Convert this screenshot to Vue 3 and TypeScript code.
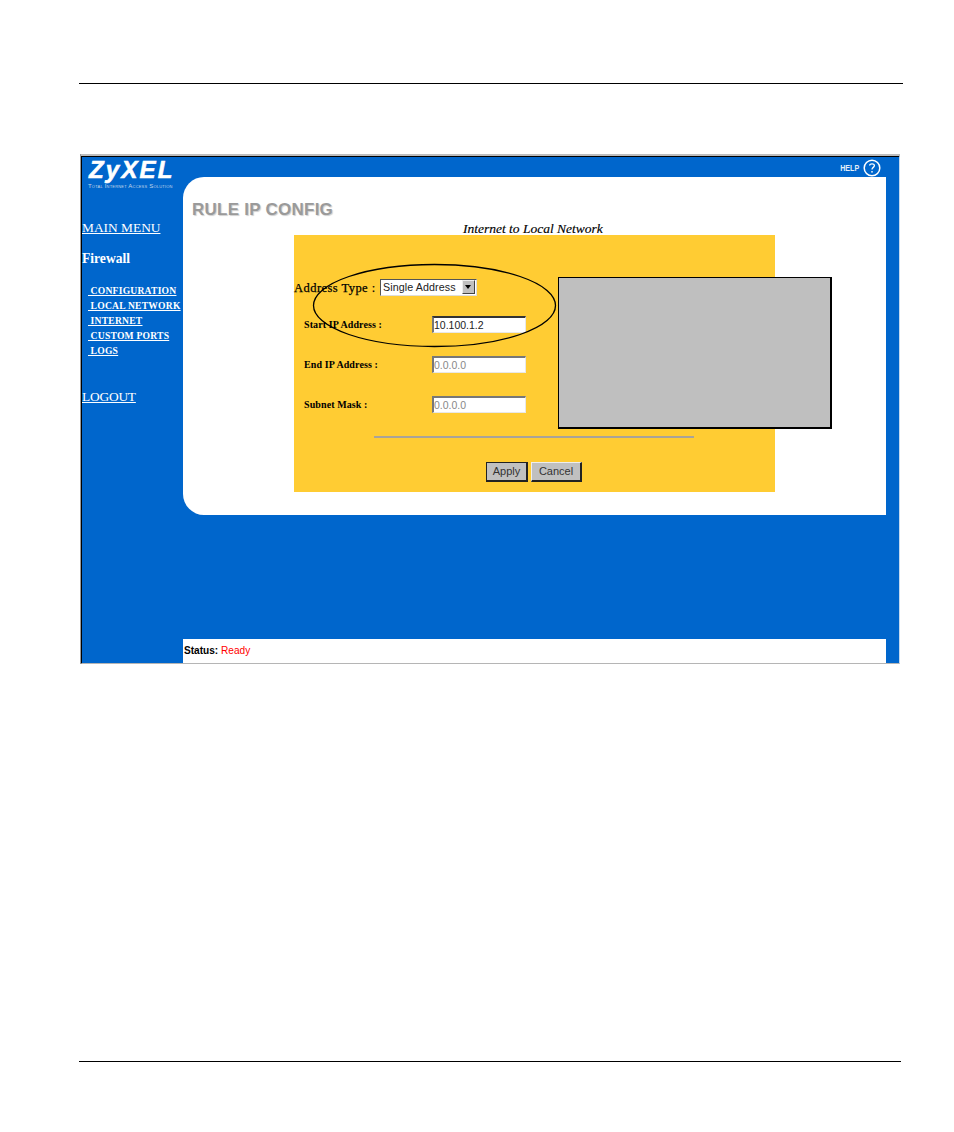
<script setup lang="ts">
const navLinks: string[] = ['CONFIGURATION', 'LOCAL NETWORK', 'INTERNET', 'CUSTOM PORTS', 'LOGS']
</script>

<template>
  <div class="page">
    <div class="rule"></div>
    <div class="frame">
      <aside class="side">
        <div class="logo">ZyXEL</div>
        <div class="tagline">Total Internet Access Solution</div>
        <a class="main-link">MAIN MENU</a>
        <div class="section">Firewall</div>
        <nav class="nav">
          <a v-for="l in navLinks" :key="l" class="nav-link">&nbsp;{{ l }}</a>
        </nav>
        <a class="logout">LOGOUT</a>
      </aside>
      <main class="main">
        <div class="help">
          <span class="help-text">HELP</span>
          <svg class="help-icon" width="18" height="18" viewBox="0 0 18 18">
            <circle cx="9" cy="9" r="7.8" fill="none" stroke="#fff" stroke-width="1.5" />
            <path d="M6.6 6.6 C6.6 4.4 11.4 4.4 11.4 6.6 C11.4 8.4 9 8.4 9 10.6" fill="none" stroke="#fff" stroke-width="1.3" />
            <rect x="8.3" y="12" width="1.4" height="1.6" fill="#fff" />
          </svg>
        </div>
        <section class="panel">
          <h1 class="title">RULE IP CONFIG</h1>
          <div class="subtitle">Internet to Local Network</div>
          <div class="form">
            <div class="type-row">
              <label class="type-label">Address Type :</label>
              <div class="select">
                <span class="select-text">Single Address</span>
                <span class="select-btn"></span>
              </div>
            </div>
            <div class="field first">
              <label class="field-label">Start IP Address :</label>
              <div class="input">10.100.1.2</div>
            </div>
            <div class="field">
              <label class="field-label">End IP Address :</label>
              <div class="input off">0.0.0.0</div>
            </div>
            <div class="field">
              <label class="field-label">Subnet Mask :</label>
              <div class="input off">0.0.0.0</div>
            </div>
            <div class="divider"></div>
            <div class="buttons">
              <div class="btn apply">Apply</div>
              <div class="btn">Cancel</div>
            </div>
          </div>
          <svg class="ellipse" width="246" height="86" viewBox="0 0 246 86">
            <ellipse cx="122.5" cy="42.5" rx="121" ry="41" fill="none" stroke="#000" stroke-width="1.3" />
          </svg>
          <div class="callout"></div>
        </section>
        <div class="status"><b>Status:</b> <span class="ready">Ready</span></div>
      </main>
    </div>
    <div class="rule bottom"></div>
  </div>
</template>

<style scoped>
.page {
  width: 954px;
  height: 1132px;
  padding-top: 83px;
  box-sizing: border-box;
  background: #fff;
  overflow: hidden;
  font-family: "Liberation Serif", serif;
}
.rule {
  height: 1px;
  margin: 0 51px 0 79px;
  background: #000;
}
.rule.bottom {
  margin: 397px 53px 0 79px;
}
.frame {
  display: flex;
  box-sizing: border-box;
  width: 820px;
  height: 510px;
  margin: 70px 0 0 80px;
  background: #0066cc;
  border-top: 3px solid #000;
  border-left: 2px solid #000;
  border-right: 1px solid #c5d9ee;
  border-bottom: 1px solid #b5b5b5;
  position: relative;
}
.frame::before {
  content: "";
  position: absolute;
  left: -2px;
  right: -1px;
  top: -3px;
  height: 2px;
  background: #bdbdbd;
}
.frame::after {
  content: "";
  position: absolute;
  left: -2px;
  top: -3px;
  bottom: -1px;
  width: 1px;
  background: #9a9a9a;
}
.side {
  width: 101px;
  flex: none;
  color: #fff;
}
.logo {
  margin: 2px 0 0 7px;
  height: 22px;
  font: italic 700 24px/22px "Liberation Sans", sans-serif;
  -webkit-text-stroke: 0.6px #fff;
  letter-spacing: 2.2px;
  white-space: nowrap;
}
.tagline {
  margin: 1px 0 0 6px;
  font: 6px/8px "Liberation Sans", sans-serif;
  font-variant: small-caps;
  white-space: nowrap;
  color: #c3d6ea;
  width: 90px;
  letter-spacing: 0.2px;
}
.main-link {
  display: block;
  margin-top: 30px;
  font-size: 13.4px;
  line-height: 15px;
  text-decoration: underline;
  white-space: nowrap;
}
.section {
  margin-top: 16px;
  font-weight: 700;
  font-size: 13.6px;
  line-height: 15px;
}
.nav {
  display: flex;
  flex-direction: column;
  margin-top: 17px;
  margin-left: 6px;
}
.nav-link {
  display: block;
  height: 15px;
  font-weight: 700;
  font-size: 9.6px;
  line-height: 15px;
  letter-spacing: 0.22px;
  text-decoration: underline;
  white-space: nowrap;
}
.logout {
  display: block;
  margin-top: 31px;
  font-size: 13.4px;
  line-height: 15px;
  text-decoration: underline;
  letter-spacing: -0.2px;
}
.main {
  width: 703px;
  flex: none;
  display: flex;
  flex-direction: column;
}
.help {
  height: 20px;
  display: flex;
  align-items: center;
  justify-content: flex-end;
  gap: 1px;
  padding: 2px 5px 0 0;
  box-sizing: border-box;
}
.help-text {
  color: #e4eef8;
  font: 700 9.5px/10px "Liberation Sans", sans-serif;
  transform: scaleX(0.75);
}
.panel {
  position: relative;
  height: 338px;
  background: #fff;
  border-radius: 21px 0 0 21px;
  padding-top: 24px;
  box-sizing: border-box;
}
.title {
  margin: 0 0 0 9px;
  font: 700 17px/18px "Liberation Sans", sans-serif;
  color: #9a9a9a;
  text-shadow: 1px 1px 1px #cfcfcf;
  letter-spacing: 0.25px;
}
.subtitle {
  margin: 3px 0 0 280px;
  font-style: italic;
  font-size: 13.5px;
  line-height: 13px;
  color: #000;
  -webkit-text-stroke: 0.15px #000;
  white-space: nowrap;
}
.form {
  position: relative;
  margin: 0 0 0 111px;
  width: 481px;
  height: 257px;
  background: #ffcc33;
  box-sizing: border-box;
  padding-top: 42px;
  color: #000;
}
.type-row {
  display: flex;
  align-items: center;
  height: 20px;
}
.type-label {
  width: 86px;
  font-size: 12.5px;
  font-weight: 400;
  letter-spacing: 0.45px;
  white-space: nowrap;
  -webkit-text-stroke: 0.25px #000;
  padding-top: 2px;
}
.select {
  width: 97px;
  height: 17px;
  box-sizing: border-box;
  background: #fff;
  border-top: 1px solid #555;
  border-left: 1px solid #555;
  border-right: 1px solid #ddd;
  border-bottom: 1px solid #ddd;
  display: flex;
  align-items: center;
  justify-content: space-between;
  padding: 0 1px 0 2px;
  font: 10.7px/14px "Liberation Sans", sans-serif;
  color: #222;
}
.select-text {
  white-space: nowrap;
  letter-spacing: 0.1px;
}
.select-btn {
  position: relative;
  width: 13px;
  height: 14px;
  background: #c0c0c0;
  border: 1px solid #444;
  border-top-color: #eee;
  border-left-color: #eee;
  box-sizing: border-box;
  flex: none;
}
.select-btn::after {
  content: "";
  position: absolute;
  left: 2px;
  top: 4px;
  border-left: 3px solid transparent;
  border-right: 3px solid transparent;
  border-top: 4px solid #000;
}
.field {
  display: flex;
  align-items: center;
  height: 17px;
  margin-top: 23px;
  padding-left: 10px;
}
.field.first {
  margin-top: 19px;
}
.field-label {
  width: 128px;
  flex: none;
  font-weight: 700;
  font-size: 10px;
  letter-spacing: 0.1px;
  white-space: nowrap;
}
.input {
  width: 94px;
  height: 17px;
  box-sizing: border-box;
  background: #fff;
  border-top: 2px solid #333;
  border-left: 2px solid #777;
  border-right: 1px solid #e8e8e8;
  border-bottom: 1px solid #e8e8e8;
  font: 10.5px/14px "Liberation Sans", sans-serif;
  color: #222;
}
.input.off {
  color: #888;
  border-top-color: #777;
}
.divider {
  height: 2px;
  margin: 23px 0 0 80px;
  width: 320px;
  background: #a9a39a;
}
.buttons {
  display: flex;
  gap: 3px;
  margin: 24px 0 0 192px;
}
.btn {
  width: 51px;
  height: 20px;
  box-sizing: border-box;
  background: #c0c0c0;
  border: 1px solid #eee;
  border-right: 2px solid #222;
  border-bottom: 2px solid #222;
  text-align: center;
  font: 11px/17px "Liberation Sans", sans-serif;
  color: #333;
}
.btn.apply {
  width: 42px;
  border-color: #222;
  border-width: 1px 2px 2px 1px;
}
.ellipse {
  position: absolute;
  left: 129px;
  top: 86px;
}
.callout {
  position: absolute;
  left: 375px;
  top: 100px;
  width: 274px;
  height: 152px;
  box-sizing: border-box;
  background: #bfbfbf;
  border: 1px solid #000;
  border-right-width: 2px;
  border-bottom-width: 2px;
}
.status {
  margin-top: 124px;
  height: 24px;
  padding-left: 1px;
  background: #fff;
  font: 10.1px/24px "Liberation Sans", sans-serif;
  color: #000;
  white-space: nowrap;
}
.ready {
  color: #ff0000;
}
</style>
